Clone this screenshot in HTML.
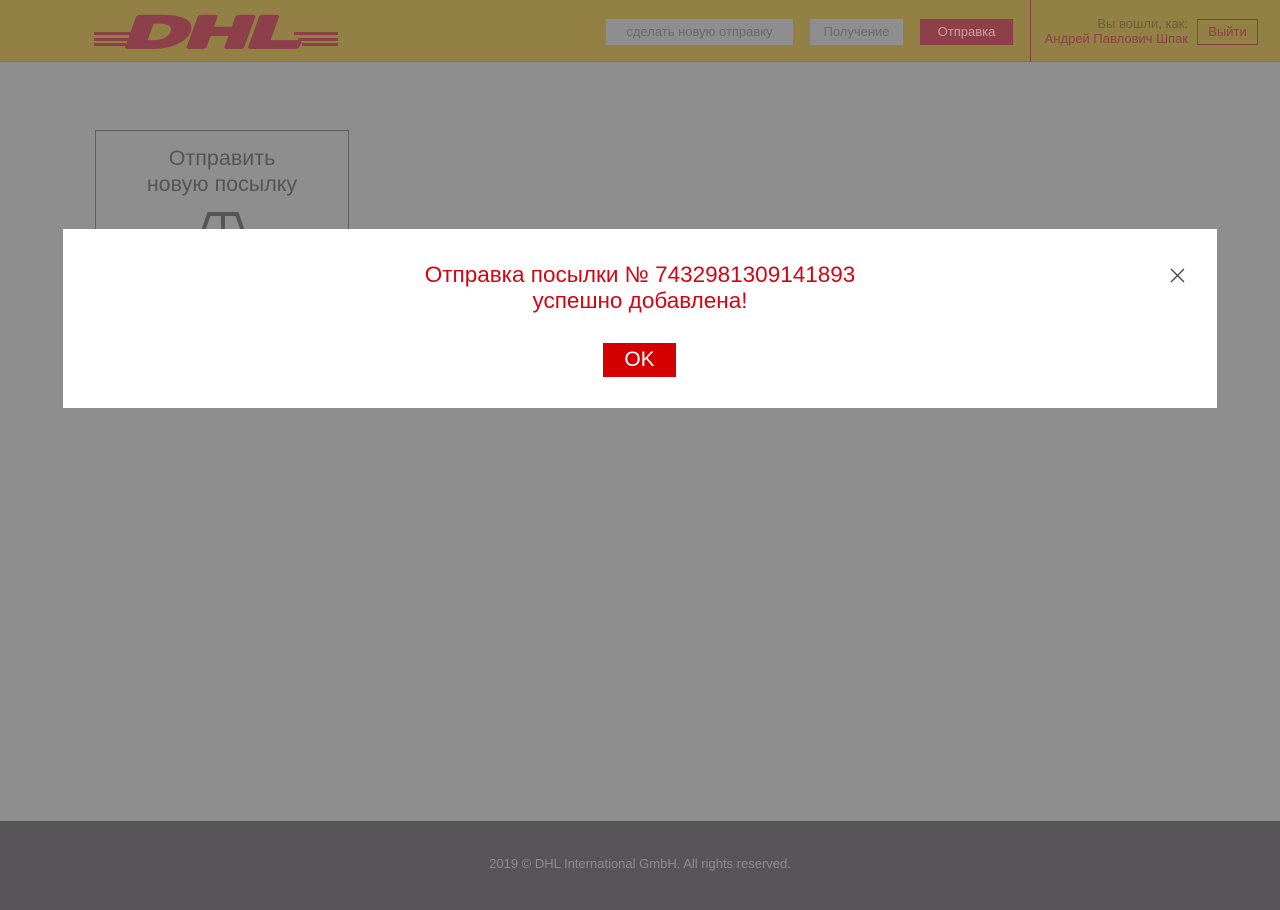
<!DOCTYPE html>
<html><head><meta charset="utf-8"><style>
*{margin:0;padding:0;box-sizing:border-box}
body{width:1280px;height:910px;position:relative;background:#8f8e8f;font-family:"Liberation Sans","DejaVu Sans",sans-serif;overflow:hidden}
.hdr{position:absolute;left:0;top:0;width:1280px;height:62px;background:#938044;border-bottom:1px solid #847440}
.btn{position:absolute;top:19px;height:26px;font-size:13px;line-height:26px;text-align:center}
.foot{position:absolute;left:0;top:821px;width:1280px;height:89px;background:#575557;color:#8d8b8d;font-size:13px;text-align:center;line-height:86px}
.card{position:absolute;left:95px;top:130px;width:254px;height:120px;border:1px solid #5f5e5f;color:#555;font-size:21.5px;text-align:center;line-height:26px;padding-top:14px}
.modal{position:absolute;left:63px;top:229px;width:1154px;height:179px;background:#fff}
.msg{position:absolute;left:0;top:33px;width:100%;text-align:center;color:#d40511;font-size:22.5px;line-height:26px}
.ok{position:absolute;left:540px;top:114px;width:73px;height:34px;background:#d40000;color:#fff;font-size:21px;line-height:34px;text-align:center}
</style></head><body>
<div class="hdr">
<svg style="position:absolute;left:94px;top:12px" width="246" height="38" viewBox="0 0 246 38">
<g fill="#8e404a">
<rect x="0" y="20" width="40" height="3"/><rect x="0" y="26" width="36" height="3"/><rect x="0" y="31" width="32" height="3"/>
<rect x="200" y="20" width="44" height="3"/><rect x="204" y="26" width="40" height="3"/><rect x="208" y="31" width="36" height="3"/>
<text x="30" y="35" font-family="Liberation Sans" font-weight="bold" font-size="44" stroke="#8e404a" stroke-width="4" stroke-linejoin="round" transform="skewX(-20) translate(12,0)" textLength="175" lengthAdjust="spacingAndGlyphs">DHL</text>
</g></svg>
<div class="btn" style="left:606px;width:187px;background:#8e8e8e;color:#6a6a6a">сделать новую отправку</div>
<div class="btn" style="left:810px;width:93px;background:#8e8e8e;color:#6a6a6a">Получение</div>
<div class="btn" style="left:920px;width:93px;background:#8e404a;color:#c8a0a0">Отправка</div>
<div style="position:absolute;left:1030px;top:0;width:1px;height:62px;background:#8e404a"></div>
<div style="position:absolute;right:92px;top:16px;text-align:right;font-size:13px;line-height:15px;color:#6a5f3a">Вы вошли, как:<br><span style="color:#8e404a">Андрей Павлович Шпак</span></div>
<div class="btn" style="left:1197px;width:61px;top:19px;border:1px solid #8e404a;color:#8e404a;line-height:24px">Выйти</div>
</div>
<div class="card">Отправить<br>новую посылку
<svg style="position:absolute;left:95px;top:80px" width="64" height="40"><path d="M6 38 L18 3 L46 3 L58 38 M32 3 V38" stroke="#555" stroke-width="4" fill="none"/></svg>
</div>
<div class="modal">
<div class="msg">Отправка посылки № 7432981309141893<br>успешно добавлена!</div>
<div class="ok">OK</div>
<svg style="position:absolute;left:1107px;top:39px" width="15" height="15"><path d="M1 1L14 14M14 1L1 14" stroke="#444" stroke-width="1.3"/></svg>
</div>
<div class="foot">2019 © DHL International GmbH. All rights reserved.</div>
</body></html>
